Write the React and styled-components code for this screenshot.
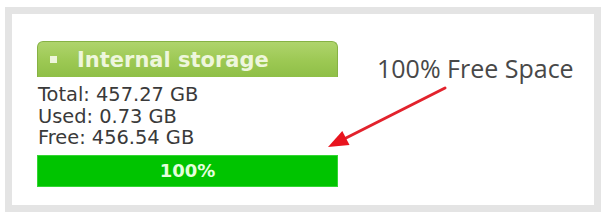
import React from 'react';
import styled, { createGlobalStyle } from 'styled-components';

const GlobalStyle = createGlobalStyle`
  html, body {
    margin: 0;
    padding: 0;
    background: #ffffff;
  }
`

const Page = styled.div`
    width: 604px;
    height: 217px;
    padding: 7px 0 0 5px;
    box-sizing: border-box;
    background: #ffffff;
`

const Frame = styled.div`
    position: relative;
    width: 596px;
    height: 205px;
    box-sizing: border-box;
    border: 7px solid #e4e4e4;
    padding: 27px 0 0 25px;
    background: #ffffff;
`

const Widget = styled.div`
    width: 301px;
    display: flex;
    flex-direction: column;
`

const Header = styled.div`
    height: 36px;
    box-sizing: border-box;
    display: flex;
    align-items: center;
    padding-left: 12px;
    border: 1px solid #86b244;
    border-bottom: none;
    border-radius: 6px 6px 0 0;
    background: linear-gradient(to bottom, #afd46c 0%, #9cc853 55%, #8fbf47 100%);
`

const Bullet = styled.span`
    width: 7px;
    height: 7px;
    margin-right: 20px;
    background: #eef6dc;
`

const HeaderTitle = styled.span`
    font-family: "DejaVu Sans", Verdana, sans-serif;
    font-weight: bold;
    font-size: 21px;
    color: #eef6dc;
`

const Stats = styled.div`
    padding: 7px 0 6px 1px;
    font-family: "DejaVu Sans", Verdana, sans-serif;
    font-size: 19.4px;
    line-height: 21.5px;
    color: #3a3a3a;
`

const Bar = styled.div`
    height: 32px;
    box-sizing: border-box;
    display: flex;
    align-items: center;
    justify-content: center;
    background: #00c400;
    border: 1px solid #33d633;
    font-family: "DejaVu Sans", Verdana, sans-serif;
    font-weight: bold;
    font-size: 18px;
    color: #e4ffdc;
`

const Callout = styled.div`
    position: absolute;
    left: 365px;
    top: 42px;
    font-family: "Open Sans", sans-serif;
    font-size: 25px;
    line-height: 25px;
    color: #484848;
    white-space: nowrap;
`

const ArrowSvg = styled.svg`
    position: absolute;
    left: 298px;
    top: 66px;
`

const stats = [
    { label: 'Total', value: '457.27 GB' },
    { label: 'Used', value: '0.73 GB' },
    { label: 'Free', value: '456.54 GB' },
];

const App = () => {
    return (
        <>
            <GlobalStyle />
            <Page>
                <Frame>
                    <Widget>
                        <Header>
                            <Bullet />
                            <HeaderTitle>Internal storage</HeaderTitle>
                        </Header>
                        <Stats>
                            {stats.map(s => (
                                <div key={s.label}>{s.label}: {s.value}</div>
                            ))}
                        </Stats>
                        <Bar>100%</Bar>
                    </Widget>

                    <Callout>100% Free Space</Callout>
                    <ArrowSvg width="150" height="80" viewBox="0 0 150 80">
                        <line x1="135" y1="8" x2="36" y2="58" stroke="#e2222c" strokeWidth="3" strokeLinecap="round" />
                        <polygon points="18,67 39.5,65.1 32.3,50.9" fill="#e8141e" />
                    </ArrowSvg>
                </Frame>
            </Page>
        </>
    )
}

export default App;
